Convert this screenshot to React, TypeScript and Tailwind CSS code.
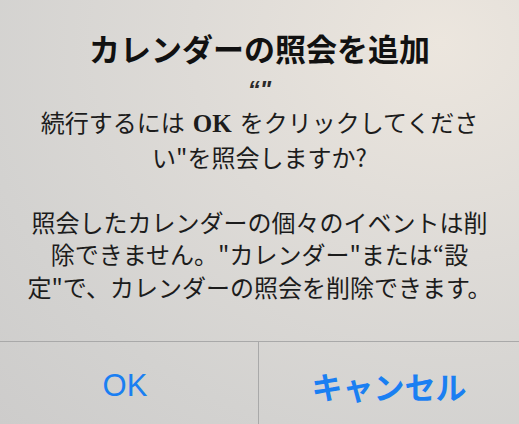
export default function App() {
  return (
    <div
      className="w-[519px] h-[424px] flex flex-col overflow-hidden text-[#1c1c1c] bg-[radial-gradient(ellipse_at_85%_10%,#ece6de_0%,#dedbd7_40%,#d3d2d0_75%,#cdcccb_100%)]"
      style={{ fontFamily: '"Noto Sans CJK JP", "Noto Sans", sans-serif' }}
    >
      {/* Message */}
      <div className="flex-1 flex flex-col items-center">
        <div className="mt-[29px] text-[31px] leading-[37px] font-bold text-[#111111] whitespace-nowrap">
          カレンダーの照会を追加
        </div>
        <div className="mt-[13px] text-[24px] leading-[22px] italic font-bold font-['Liberation_Sans'] text-[#2a2a2a]">
          “"
        </div>
        <div className="mt-[5px] flex flex-col items-center text-[24px] leading-[32.5px] whitespace-nowrap">
          <div>
            続行するには
            <span className="font-['Liberation_Serif'] font-bold text-[25px] mx-[8px]">OK</span>
            をクリックしてくださ
          </div>
          <div>い"を照会しますか?</div>
          <div className="h-[32.5px]" />
          <div>照会したカレンダーの個々のイベントは削</div>
          <div>除できません。"カレンダー"または“設</div>
          <div>定"で、カレンダーの照会を削除できます。</div>
        </div>
      </div>

      {/* Buttons */}
      <div className="h-[83px] flex border-t border-[#a9a9a9]">
        <div className="w-[259px] border-r border-[#a9a9a9] flex items-center justify-center pt-[6px] pr-[8px]">
          <span className="text-[31px] font-['Liberation_Sans'] text-[#1a7ff2]">OK</span>
        </div>
        <div className="flex-1 flex items-center justify-center pt-[6px]">
          <span className="text-[31px] font-bold text-[#1a7ff2]">キャンセル</span>
        </div>
      </div>
    </div>
  );
}
